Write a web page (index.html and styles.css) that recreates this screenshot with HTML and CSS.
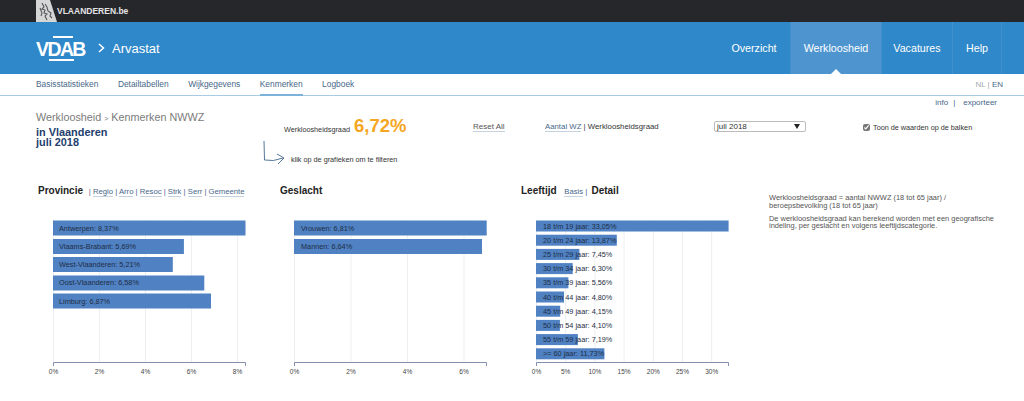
FILE: index.html
```html
<!DOCTYPE html>
<html lang="nl">
<head>
  <meta charset="UTF-8" />
  <title>Arvastat</title>
  <link rel="stylesheet" href="styles.css">
</head>
<body>

  <div class="topbar">
    <div class="vl-logo">
      <svg width="21" height="22" viewBox="0 0 21 22">
        <path d="M0 0H14L21 22H0Z" fill="#d6d6d6"/>
        <path d="M6 3l2 4-2 2 3 1-1 3 3 1-2 2 2 4M9 4l2 3 1 4 3 2-1 3 2 2M4 8l2 5-1 3" fill="none" stroke="#55585c" stroke-width="1.100"/>
      </svg>
      <span>VLAANDEREN.be</span>
    </div>
  </div>

  <header class="header">
    <div class="brand">
      <span class="vdab">VDAB</span>
      <svg class="chevron" width="7" height="10" viewBox="0 0 7 10">
        <path d="M1 1l4.500 4L1 9" fill="none" stroke="#fff" stroke-width="1.500"/>
      </svg>
      <span class="app-name">Arvastat</span>
    </div>
    <nav class="mainnav">
      <a class="nav-overzicht">Overzicht</a>
      <a class="nav-werk active">Werkloosheid</a>
      <a class="nav-vacatures">Vacatures</a>
      <a class="nav-help">Help</a>
    </nav>
  </header>

  <div class="subnav">
    <a>Basisstatistieken</a>
    <a>Detailtabellen</a>
    <a>Wijkgegevens</a>
    <a class="active">Kenmerken</a>
    <a>Logboek</a>
    <span class="lang">NL | <b>EN</b></span>
  </div>

  <div class="tools">
    <a>info</a><span class="tools-sep">|</span><a>exporteer</a>
  </div>

  <section class="summary">
    <div class="col-title">
      <div class="crumb">Werkloosheid <small>&gt;</small> Kenmerken NWWZ</div>
      <div class="place">in Vlaanderen<br>juli 2018</div>
    </div>
    <div class="col-kpi">
      <div class="kpi">
        <span class="kpi-label">Werkloosheidsgraad</span>
        <span class="kpi-value">6,72%</span>
      </div>
      <div class="hint">
        <svg width="24" height="25" viewBox="0 0 24 25">
          <path d="M1 1L1.500 20Q10 22 20 18M14 14L21 18L15 24" fill="none" stroke="#56779b" stroke-width="1"/>
        </svg>
        <span>klik op de grafieken om te filteren</span>
      </div>
    </div>
    <div class="col-reset"><a class="link">Reset All</a></div>
    <div class="col-toggle"><a class="link">Aantal WZ</a> | Werkloosheidsgraad</div>
    <div class="col-select">
      <div class="select">juli 2018<i></i></div>
    </div>
    <label class="col-check"><input type="checkbox" checked> Toon de waarden op de balken</label>
  </section>

  <section class="charts">
    <div class="chart chart-prov">
      <h2>Provincie <span class="links">| <a>Regio</a> | <a>Arro</a> | <a>Resoc</a> | <a>Strk</a> | <a>Serr</a> | <a>Gemeente</a></span></h2>
      <svg width="230" height="170" viewBox="0 0 230 170">
        <g class="grid">
          <path d="M15.500 9V152M61.500 9V152M107.500 9V152M153.500 9V152M199.500 9V152"/>
        </g>
        <g class="bars">
          <rect x="15" y="9.500" width="192.500" height="15"/>
          <rect x="15" y="28" width="130.900" height="15"/>
          <rect x="15" y="46" width="119.800" height="15"/>
          <rect x="15" y="64.500" width="151.300" height="15"/>
          <rect x="15" y="82.500" width="158" height="15"/>
        </g>
        <g class="labels">
          <text x="21" y="19.500">Antwerpen: 8,37%</text>
          <text x="21" y="37.500">Vlaams-Brabant: 5,69%</text>
          <text x="21" y="56">West-Vlaanderen: 5,21%</text>
          <text x="21" y="74">Oost-Vlaanderen: 6,58%</text>
          <text x="21" y="92.500">Limburg: 6,87%</text>
        </g>
        <path class="axis" d="M15.500 155V151.500H207.500V155"/>
        <g class="ticks">
          <text x="15.500" y="162.500">0%</text>
          <text x="61.500" y="162.500">2%</text>
          <text x="107.500" y="162.500">4%</text>
          <text x="153.500" y="162.500">6%</text>
          <text x="199.500" y="162.500">8%</text>
        </g>
      </svg>
    </div>

    <div class="chart chart-gesl">
      <h2>Geslacht</h2>
      <svg width="230" height="170" viewBox="0 0 230 170">
        <g class="grid">
          <path d="M14.500 9V152M71 9V152M127.500 9V152M184 9V152"/>
        </g>
        <g class="bars">
          <rect x="14" y="9.500" width="192.700" height="15"/>
          <rect x="14" y="28" width="188" height="15"/>
        </g>
        <g class="labels">
          <text x="21" y="19.500">Vrouwen: 6,81%</text>
          <text x="21" y="37.500">Mannen: 6,64%</text>
        </g>
        <path class="axis" d="M14.500 155V151.500H206.500V155"/>
        <g class="ticks">
          <text x="14.500" y="162.500">0%</text>
          <text x="71" y="162.500">2%</text>
          <text x="127.500" y="162.500">4%</text>
          <text x="184" y="162.500">6%</text>
        </g>
      </svg>
    </div>

    <div class="chart chart-leef">
      <h2>Leeftijd <span class="links links-basis"><a>Basis</a> | </span><span class="detail">Detail</span></h2>
      <svg width="230" height="170" viewBox="0 0 230 170">
        <g class="grid">
          <path d="M15.500 9V152M44.700 9V152M73.900 9V152M103.100 9V152M132.300 9V152M161.500 9V152M190.700 9V152"/>
        </g>
        <g class="bars">
          <rect x="15" y="9.500" width="192.600" height="11"/>
          <rect x="15" y="23.700" width="80.800" height="11"/>
          <rect x="15" y="37.900" width="43.400" height="11"/>
          <rect x="15" y="52.100" width="36.700" height="11"/>
          <rect x="15" y="66.300" width="32.400" height="11"/>
          <rect x="15" y="80.500" width="28" height="11"/>
          <rect x="15" y="94.700" width="24.200" height="11"/>
          <rect x="15" y="108.900" width="23.900" height="11"/>
          <rect x="15" y="123.100" width="41.900" height="11"/>
          <rect x="15" y="137.300" width="68.400" height="11"/>
        </g>
        <g class="labels">
          <text x="22" y="17.500">18 t/m 19 jaar: 33,05%</text>
          <text x="22" y="31.700">20 t/m 24 jaar: 13,87%</text>
          <text x="22" y="45.900">25 t/m 29 jaar: 7,45%</text>
          <text x="22" y="60.100">30 t/m 34 jaar: 6,30%</text>
          <text x="22" y="74.300">35 t/m 39 jaar: 5,56%</text>
          <text x="22" y="88.500">40 t/m 44 jaar: 4,80%</text>
          <text x="22" y="102.700">45 t/m 49 jaar: 4,15%</text>
          <text x="22" y="116.900">50 t/m 54 jaar: 4,10%</text>
          <text x="22" y="131.100">55 t/m 59 jaar: 7,19%</text>
          <text x="22" y="145.300">&gt;= 60 jaar: 11,73%</text>
        </g>
        <path class="axis" d="M15.500 155V151.500H207.500V155"/>
        <g class="ticks">
          <text x="15.500" y="162.500">0%</text>
          <text x="44.700" y="162.500">5%</text>
          <text x="73.900" y="162.500">10%</text>
          <text x="103.100" y="162.500">15%</text>
          <text x="132.300" y="162.500">20%</text>
          <text x="161.500" y="162.500">25%</text>
          <text x="190.700" y="162.500">30%</text>
        </g>
      </svg>
    </div>

    <div class="explain">
      <p>Werkloosheidsgraad = aantal NWWZ (18 tot 65 jaar) / beroepsbevolking (18 tot 65 jaar)</p>
      <p>De werkloosheidsgraad kan berekend worden met een geografische indeling, per geslacht en volgens leeftijdscategorie.</p>
    </div>
  </section>

</body>
</html>
```

FILE: styles.css
```css
* {
  box-sizing: border-box;
}

html, body {
  height: 401px;
  overflow: hidden;
}

body {
  margin: 0;
  background: #fff;
  color: #333;
  font-family: "Liberation Sans", Arial, sans-serif;
  font-size: 8px;
}

.topbar {
  height: 22px;
  background: #26272b;
  padding-left: 36px;
}

.vl-logo {
  display: flex;
  align-items: center;
  height: 22px;
  color: #e4e4e4;
  font-size: 8.500px;
  font-weight: bold;
}

.header {
  display: flex;
  justify-content: space-between;
  height: 52px;
  padding: 0 22px 0 36px;
  background: #2f88c9;
  color: #fff;
}

.brand {
  display: flex;
  align-items: center;
}

.vdab {
  position: relative;
  top: 1px;
  width: 62px;
  font-size: 19.500px;
  font-weight: bold;
  letter-spacing: -1.600px;
  line-height: 20px;
}

.vdab::before,
.vdab::after {
  content: "";
  position: absolute;
  height: 1.500px;
  background: #fff;
}

.vdab::before {
  left: 17px;
  top: -3px;
  width: 20px;
}

.vdab::after {
  left: 13px;
  top: 20px;
  width: 25px;
}

.chevron {
  margin-right: 7px;
}

.app-name {
  font-size: 13px;
}

.mainnav {
  display: flex;
}

.mainnav a {
  position: relative;
  display: flex;
  align-items: center;
  justify-content: center;
  height: 52px;
  border-right: 1px solid #3f90cc;
  font-size: 10.700px;
}

.nav-overzicht { width: 73px; }
.nav-werk { width: 91px; }
.nav-vacatures { width: 71px; }
.nav-help { width: 49px; }

.mainnav a.active {
  background: #4e95d0;
}

.mainnav a.active::after {
  content: "";
  position: absolute;
  left: 50%;
  bottom: 0;
  margin-left: -5px;
  border: 5px solid transparent;
  border-top: 0;
  border-bottom-color: #fff;
}

.subnav {
  display: flex;
  gap: 19.500px;
  height: 22px;
  padding: 0 21px 0 36px;
  border-bottom: 1px solid #a8cbe4;
  color: #47678a;
  font-size: 8.400px;
}

.subnav a {
  line-height: 21px;
}

.subnav a.active {
  height: 22px;
  border-bottom: 2px solid #7cb3da;
}

.lang {
  margin-left: auto;
  color: #a4a9ae;
  font-size: 8px;
  line-height: 21px;
}

.lang b {
  color: #47678a;
  font-weight: normal;
}

.tools {
  display: flex;
  justify-content: flex-end;
  height: 14px;
  padding-right: 27px;
  color: #47678a;
  line-height: 14px;
}

.tools-sep {
  margin: 0 8px 0 5px;
}

.summary {
  display: flex;
  height: 72px;
}

.col-title {
  width: 284px;
  padding-left: 36px;
}

.crumb {
  color: #7b7b7b;
  font-size: 10.800px;
  line-height: 14px;
}

.crumb small {
  font-size: 7px;
}

.place {
  margin-top: 1px;
  color: #24406e;
  font-size: 10.900px;
  font-weight: bold;
  line-height: 10px;
}

.col-kpi {
  width: 189px;
  font-size: 7.250px;
}

.kpi {
  display: flex;
  align-items: center;
  height: 28px;
  margin-top: 2px;
}

.kpi-label {
  width: 70px;
  padding-top: 7px;
}

.kpi-value {
  color: #f5a623;
  font-size: 18.500px;
  font-weight: bold;
}

.hint {
  display: flex;
  align-items: flex-end;
  gap: 4px;
  margin-left: -21px;
}

.hint span {
  padding-bottom: 1px;
}

.col-reset {
  width: 72px;
  padding-top: 12px;
}

.col-toggle {
  width: 169px;
  padding-top: 12px;
  font-size: 7.800px;
}

.link {
  border-bottom: 1px solid #c5d3e0;
  color: #47678a;
}

.col-reset .link {
  color: #555;
}

.col-select {
  width: 149px;
  padding-top: 11px;
}

.select {
  position: relative;
  width: 92px;
  height: 11px;
  padding-left: 2px;
  border: 1px solid #bbb;
  border-radius: 2px;
  line-height: 9px;
}

.select i {
  position: absolute;
  right: 5px;
  top: 2px;
  border: 3px solid transparent;
  border-top: 5px solid #222;
  border-bottom: 0;
}

.col-check {
  display: flex;
  align-items: flex-start;
  gap: 3px;
  padding-top: 13px;
  font-size: 7.250px;
}

.col-check input {
  width: 7px;
  height: 7px;
  margin: 1px 0 0;
  accent-color: #777;
}

.charts {
  display: flex;
}

.chart {
  width: 242px;
}

.chart-prov {
  margin-left: 38px;
}

.chart-gesl {
  width: 241px;
}

.chart-leef {
  width: 248px;
}

.chart h2 {
  height: 29px;
  margin: 0;
  color: #222;
  font-size: 10px;
  font-weight: bold;
  line-height: 18px;
}

.chart svg {
  display: block;
}

.links {
  margin-left: 3px;
  color: #47678a;
  font-size: 7.700px;
  font-weight: normal;
}

.links a {
  border-bottom: 1px solid #c5d3e0;
}

.links-basis {
  margin-left: 5px;
  margin-right: 2px;
}

.grid path {
  fill: none;
  stroke: #eceef1;
  stroke-width: 1;
}

.bars rect {
  fill: #4f81c3;
}

.labels text {
  fill: #1f2e44;
  font-size: 7.300px;
}

.axis {
  fill: none;
  stroke: #8490ad;
  stroke-width: 1;
}

.ticks text {
  fill: #444;
  font-size: 6.500px;
  text-anchor: middle;
}

.explain {
  width: 228px;
  padding-top: 12px;
  color: #555;
  font-size: 7.450px;
  line-height: 7.500px;
}

.explain p {
  margin: 0 0 5.500px;
}
```
